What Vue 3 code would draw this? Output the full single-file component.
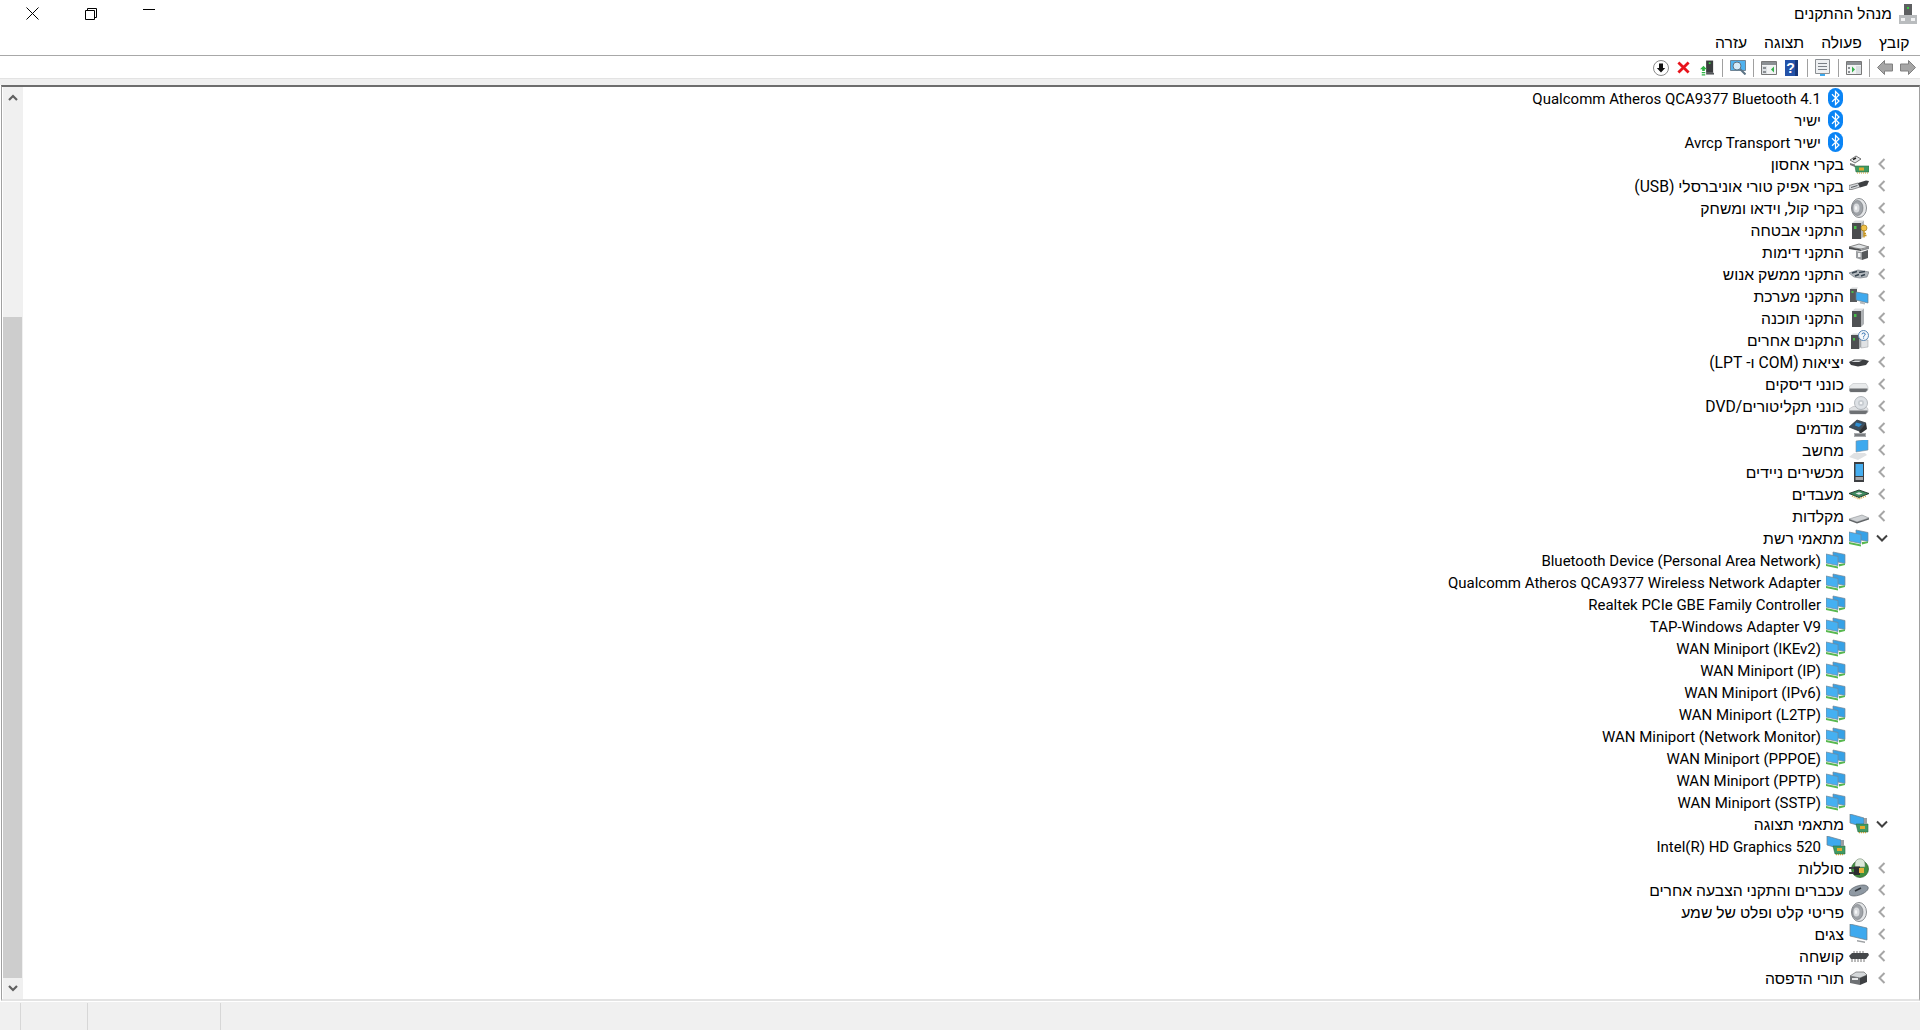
<template>
  <div class="window" dir="rtl">
    <svg class="defs" aria-hidden="true">
      <symbol id="bt" viewBox="0 0 15 20">
        <rect x="0" y="0" width="15" height="20" rx="7.5" fill="#0a84f5" />
        <path d="M4 6.200 11 13 7.500 16.500V3.500L11 7 4 13.800" fill="none" stroke="#fff" stroke-width="1.200" />
      </symbol>
      <symbol id="storage" viewBox="0 0 20 20">
        <path d="M1 6 7 2l5 3-6 4z" fill="#e2e4e6" stroke="#555" stroke-width=".8" />
        <path d="M4 5.500 7 4" stroke="#222" stroke-width="1.400" />
        <path d="M1 9l5 1.500V13L1 11z" fill="#77797b" />
        <path d="M6 12h14v6H7z" fill="#3f9a62" stroke="#2b6b45" stroke-width=".6" />
        <path d="M10 13.500h5v3h-5z" fill="#e0a92e" />
        <path d="M8 19h11" stroke="#c8a030" stroke-width="1.200" stroke-dasharray="1 1" />
      </symbol>
      <symbol id="usb" viewBox="0 0 20 20">
        <path d="M0 9.500 9 7l2 4-8 2.500H0z" fill="#d5d8db" stroke="#666" stroke-width=".7" />
        <path d="M2 11.500 8.500 9.500" stroke="#55585b" />
        <path d="M9 7l8-2.500 3 .5-2 4.500-7 2z" fill="#3d3f42" />
      </symbol>
      <symbol id="speaker" viewBox="0 0 20 20">
        <ellipse cx="10" cy="10" rx="7.500" ry="9.500" fill="#e4e6e8" stroke="#8c8f93" />
        <ellipse cx="8.500" cy="10" rx="5.500" ry="7.500" fill="#9fa3a8" stroke="#6d7075" stroke-width=".6" />
        <ellipse cx="7.500" cy="10" rx="3" ry="4.500" fill="#d9dbde" />
        <ellipse cx="7" cy="10" rx="1.200" ry="2" fill="#f6f7f8" />
      </symbol>
      <symbol id="security" viewBox="0 0 20 20">
        <path d="M3 3h9v16H3z" fill="#4a4c4e" />
        <path d="M3 3l3-2.500h9L12 3z" fill="#dcdee0" />
        <path d="M12 3l3-2.500V16l-3 3z" fill="#b3b6b9" />
        <path d="M5 6h2.500v3H5z" fill="#48c04c" />
        <circle cx="15" cy="8" r="3" fill="#f0c24a" stroke="#a57d1a" stroke-width=".7" />
        <path d="M15 10.500v7M15 15.500h2.500M15 13.500h2" stroke="#c7951f" stroke-width="1.400" />
      </symbol>
      <symbol id="imaging" viewBox="0 0 20 20">
        <path d="M0 5 10 2l10 3-8 2z" fill="#dfe2e4" stroke="#555" stroke-width=".7" />
        <path d="M0 5l12 2.500V9L0 7z" fill="#47494b" />
        <path d="M12 7.500 20 5v2l-8 2z" fill="#8a8d90" />
        <path d="M7 9l6 1v8l-6-2z" fill="#9b9ea1" />
        <path d="M13 10l6-2v8l-6 2z" fill="#55585b" />
        <path d="M9 11h2.500v4H9z" fill="#f1f2f3" />
      </symbol>
      <symbol id="hid" viewBox="0 0 20 20">
        <path d="M0 9 9 6l11 2-2 5-7 1-6-1z" fill="#b3b9be" stroke="#6b7278" stroke-width=".6" />
        <path d="M3 9l5-1.500M10 8.500l6-1M6 12l4-1.500M12 12l4-1.500" stroke="#35424d" stroke-width="1.500" />
      </symbol>
      <symbol id="system" viewBox="0 0 20 20">
        <path d="M1 3h7v13H1z" fill="#57595b" />
        <path d="M1 3l2-1.500h6L8 3z" fill="#d4d6d8" />
        <path d="M2.500 5h2v2h-2z" fill="#47bd4b" />
        <path d="M7 6l12 2v9L7 14z" fill="#3ea9ee" stroke="#6c7c88" stroke-width=".7" />
        <path d="M11 15.500l5 1v2l-5-1z" fill="#b6babd" />
      </symbol>
      <symbol id="tower" viewBox="0 0 20 20">
        <path d="M3 3h9v16H3z" fill="#4f5153" />
        <path d="M3 3l3-2.500h9L12 3z" fill="#dcdee0" />
        <path d="M12 3l3-2.500V16l-3 3z" fill="#aeb1b4" />
        <path d="M5 6h2.500v3H5z" fill="#47bd4b" />
      </symbol>
      <symbol id="other" viewBox="0 0 20 20">
        <path d="M2 5h8v14H2z" fill="#4f5153" />
        <path d="M2 5l2-1.500h8L10 5z" fill="#d9dbdd" />
        <path d="M10 5l2-1.500V17l-2 2z" fill="#a6a9ac" />
        <path d="M4 8h2v2.500H4z" fill="#47bd4b" />
        <path d="M12 10h7v7l-7 1z" fill="#e0e2e4" stroke="#9a9da0" stroke-width=".5" />
        <circle cx="14.500" cy="5.500" r="5" fill="#f5f8fb" stroke="#5b88b5" />
        <path d="M13 4.300c0-1.800 3.200-1.800 3.200 0 0 1.200-1.600 1.100-1.600 2.500M14.600 7.600v1" fill="none" stroke="#2a6cb0" stroke-width="1" />
      </symbol>
      <symbol id="port" viewBox="0 0 20 20">
        <path d="M0 10 5 7.500h10L20 9l-3 4-8 1.500-7-1.500z" fill="#3c3e41" />
        <path d="M2 10l4-1.500h7l-3 1.500z" fill="#d8dbdd" />
      </symbol>
      <symbol id="disk" viewBox="0 0 20 20">
        <path d="M0 13 4 9.500h13l2 3.500v3l-2 2H1l-1-2z" fill="#e8eaeb" stroke="#b5b8ba" stroke-width=".5" />
        <path d="M.5 14.500h18V16l-2 2h-15l-1-1.500z" fill="#6a6d70" />
      </symbol>
      <symbol id="dvd" viewBox="0 0 20 20">
        <path d="M0 13 4 10.500h13l2 2.500v3l-2 2H1l-1-2z" fill="#e0e2e4" stroke="#a8abae" stroke-width=".5" />
        <path d="M.5 14.500h18V16l-2 2h-15l-1-1.500z" fill="#6e7174" />
        <circle cx="12" cy="7" r="6.500" fill="#dde1e5" stroke="#9ba1a6" stroke-width=".7" />
        <circle cx="12" cy="7" r="3" fill="#c6cbd0" />
        <circle cx="12" cy="7" r="1.300" fill="#f5f6f7" />
      </symbol>
      <symbol id="modem" viewBox="0 0 20 20">
        <path d="M0 9 8 2l9 3-7 8z" fill="#3c4f5f" stroke="#2c3134" stroke-width=".7" />
        <path d="M7 4.500l6 1.500-3 3-4-1.500z" fill="#2f8fd3" />
        <path d="M10 13l7-8 1 6-7 5z" fill="#2f3234" />
        <path d="M5 15h12v4H5z" fill="#a8abae" />
        <path d="M6 16.500h10v1H6z" fill="#4c4f52" />
      </symbol>
      <symbol id="computer" viewBox="0 0 20 20">
        <path d="M7 1l12-2v11L7 12z" fill="#3ea9ee" stroke="#7f8d98" stroke-width=".6" />
        <path d="M0 17 5 13h11l2 2-9 5z" fill="#dfe1e3" />
      </symbol>
      <symbol id="mobile" viewBox="0 0 20 20">
        <path d="M5 0h10v20H5z" fill="#3d3f42" />
        <path d="M6.500 2H14v12H6.500z" fill="#45aef0" />
        <path d="M6.500 15H14v3H6.500z" fill="#a6a9ac" />
      </symbol>
      <symbol id="cpu" viewBox="0 0 20 20">
        <path d="M0 9.500 10 6l10 3.500-10 4z" fill="#3f8a5f" stroke="#1f3526" stroke-width=".9" />
        <path d="M6.500 9.500l3.500-1.300 3.500 1.300-3.500 1.300z" fill="#e5e7e8" />
        <path d="M3 12l7 3 7-3" fill="none" stroke="#d0a640" stroke-width="1.400" stroke-dasharray="1 1" />
      </symbol>
      <symbol id="keyboard" viewBox="0 0 20 20">
        <path d="M0 13 13 9l7 3-12 4z" fill="#cfd2d5" stroke="#7b7f83" stroke-width=".5" />
        <path d="M0 13l8 3 12-4v1.500L8 17.500 0 14.500z" fill="#606467" />
      </symbol>
      <symbol id="net" viewBox="0 0 20 20">
        <path d="M7 2l12 2.500v9L7 11z" fill="#36a1e6" stroke="#768795" stroke-width=".7" />
        <path d="M0 4l12 2.500v9L0 13z" fill="#45b0f2" stroke="#768795" stroke-width=".7" />
        <path d="M0 14l12 2.500v2L0 16z" fill="#58b84f" />
        <path d="M13 14l6-.5V15l-6 1.500z" fill="#58b84f" />
      </symbol>
      <symbol id="display" viewBox="0 0 20 20">
        <path d="M1 0l14 4v9L1 9z" fill="#3ea9ee" stroke="#6c7c88" stroke-width=".7" />
        <path d="M7 10h12v8H9z" fill="#3f9a62" stroke="#2b6b45" stroke-width=".6" />
        <path d="M11 12h5v3h-5z" fill="#e0a92e" />
        <path d="M15 4h3v6h-3z" fill="#9b9ea1" />
        <path d="M10 18.700h8" stroke="#c8a030" stroke-width="1.200" stroke-dasharray="1 1" />
      </symbol>
      <symbol id="battery" viewBox="0 0 20 20">
        <ellipse cx="11" cy="11" rx="8.500" ry="8.500" fill="#3f8f3d" stroke="#2b5f2b" stroke-width=".7" />
        <path d="M6 6c0-7 10-7 10 0v3H6z" fill="#dce9da" stroke="#7a8b78" stroke-width=".6" />
        <path d="M0 10h7M0 15h7" stroke="#3a3c3e" stroke-width="1.800" />
        <path d="M5 8.500h6v8.500H5z" fill="#2c2e30" />
        <path d="M10 10h5v5h-5z" fill="#e4b23a" />
      </symbol>
      <symbol id="mouse" viewBox="0 0 20 20">
        <path d="M0 13c0-4 8-8 14-8 4 0 6 2 5 4-1 3-8 7-14 7-3 0-5-1-5-3z" fill="#8f99a3" stroke="#555c63" stroke-width=".7" />
        <path d="M6 11l6-3" stroke="#2f353a" stroke-width="1.800" />
      </symbol>
      <symbol id="monitor" viewBox="0 0 20 20">
        <path d="M1 0l17 4v12L1 12z" fill="#3ea9ee" stroke="#6c7c88" stroke-width=".7" />
        <path d="M8 16l8 1.500V19l-8-1.500z" fill="#9ea1a4" />
      </symbol>
      <symbol id="chip" viewBox="0 0 20 20">
        <path d="M0 10 3 7h16l1 2-3 4H2z" fill="#44474a" />
        <path d="M3 13v3M6 13v3M9 13v3M12 13v3M15 13v3M5 7V5M8 7V5M11 7V5M14 7V5" stroke="#777" stroke-width="1" />
      </symbol>
      <symbol id="print" viewBox="0 0 20 20">
        <path d="M1 8l6-4h8l3 3-7 3z" fill="#d5d8da" stroke="#555" stroke-width=".6" />
        <path d="M1 8l10 2v7L1 15z" fill="#6e7174" />
        <path d="M11 10l7-3v7l-7 3z" fill="#3e4043" />
        <path d="M3 10h6v2H3z" fill="#e7e8e9" />
      </symbol>
      <symbol id="title-icon" viewBox="0 0 20 20">
        <path d="M6 0h8v11H6z" fill="#5d5f61" />
        <path d="M9 3h2v2H9z" fill="#38d040" />
        <path d="M1 11h18v9H1z" fill="#b9bcbe" />
        <path d="M3 14h4v3H3zM13 14h4v3h-4z" fill="#f1f2f3" />
      </symbol>
    </svg>

    <header class="titlebar">
      <svg class="title-icon"><use href="#title-icon" /></svg>
      <span class="title">מנהל ההתקנים</span>
      <div class="win-buttons">
        <span class="win-btn">
          <svg width="12" height="12" viewBox="0 0 12 12"><path d="M0 1.500h12" stroke="#000" /></svg>
        </span>
        <span class="win-btn">
          <svg width="12" height="12" viewBox="0 0 12 12" fill="none" stroke="#000">
            <path d="M2.500 2.500V.5h9v9h-2" />
            <path d="M.5 2.500h9v9h-9z" />
          </svg>
        </span>
        <span class="win-btn">
          <svg width="13" height="13" viewBox="0 0 13 13"><path d="M.5.500l12 12M12.500.500l-12 12" stroke="#000" /></svg>
        </span>
      </div>
    </header>

    <nav class="menubar">
      <span v-for="m in menus" :key="m" class="menu-item">{{ m }}</span>
    </nav>

    <div class="toolbar">
      <button class="tool">
        <svg width="16" height="15" viewBox="0 0 16 15"><path d="M15.500 7.500 8.500.5V4H.5v7h8v3.500z" fill="#a6a6a6" stroke="#808080" /></svg>
      </button>
      <button class="tool">
        <svg width="16" height="15" viewBox="0 0 16 15"><path d="M.5 7.500l7-7V4h8v7h-8v3.500z" fill="#a6a6a6" stroke="#808080" /></svg>
      </button>
      <i class="sep"></i>
      <button class="tool">
        <svg width="16" height="14" viewBox="0 0 16 14">
          <path d="M.5.500h15v13H.5z" fill="#f2f3f4" stroke="#777" />
          <path d="M1 1h14v3H1z" fill="#8b8f93" />
          <path d="M10 5h5v8h-5z" fill="#dce0e3" />
          <path d="M6 5.500l3 3-3 3z" fill="#35b04a" />
          <path d="M2 6h2v2H2zM2 10h2v2H2z" fill="#8b8f93" />
        </svg>
      </button>
      <i class="sep"></i>
      <button class="tool">
        <svg width="15" height="17" viewBox="0 0 15 17">
          <path d="M.5.5h14v14H.5z" fill="#eef0f2" stroke="#8b8f93" />
          <path d="M3 4h9v1H3zM3 7h9v1H3zM3 10h9v1H3z" fill="#7a8087" />
          <path d="M5 15h5v2H5z" fill="#3ea9ee" />
        </svg>
      </button>
      <i class="sep"></i>
      <button class="tool">
        <svg width="13" height="16" viewBox="0 0 13 16">
          <path d="M0 0h13v16H0z" fill="#2352a8" />
          <path d="M10 0h3v16h-3z" fill="#16367a" />
          <text x="5.500" y="13" class="help-mark">?</text>
        </svg>
      </button>
      <button class="tool">
        <svg width="16" height="14" viewBox="0 0 16 14">
          <path d="M.5.500h15v13H.5z" fill="#f2f3f4" stroke="#777" />
          <path d="M1 1h14v3H1z" fill="#8b8f93" />
          <path d="M1 5h5v8H1z" fill="#dce0e3" />
          <path d="M13 5.500l-3 3 3 3z" fill="#35b04a" />
          <path d="M2 6h3v2H2zM2 10h3v2H2z" fill="#8b8f93" />
        </svg>
      </button>
      <i class="sep"></i>
      <button class="tool">
        <svg width="16" height="15" viewBox="0 0 16 15">
          <path d="M.5.500h15v10H.5z" fill="#4fb2ef" stroke="#6f8596" />
          <circle cx="7" cy="6" r="4" fill="#d6ebf8" stroke="#5c7385" />
          <path d="M10 9l5.500 5.500" stroke="#5c7385" stroke-width="2" />
        </svg>
      </button>
      <i class="sep"></i>
      <button class="tool">
        <svg width="14" height="16" viewBox="0 0 16 17">
          <path d="M7 0h8v14H7z" fill="#3a3c3e" />
          <path d="M10 2h2v2h-2z" fill="#38d040" />
          <path d="M4 6 0 10h2.500v2h3v-2H8z" fill="#2fb344" />
          <path d="M2 13h4v1.500H2zM2 15.500h4V17H2z" fill="#2fb344" />
          <path d="M7 14h9v2H7z" fill="#55585b" />
        </svg>
      </button>
      <button class="tool">
        <svg width="13" height="13" viewBox="0 0 14 14"><path d="M1.500 1.500l11 11M12.500 1.500l-11 11" stroke="#e8141c" stroke-width="3" /></svg>
      </button>
      <button class="tool">
        <svg width="16" height="16" viewBox="0 0 16 16">
          <circle cx="8" cy="8" r="7.500" fill="#fff" stroke="#8a8a8a" />
          <path d="M8 12.500 3.800 8H6V3.500h4V8h2.200z" fill="#111" />
        </svg>
      </button>
    </div>

    <div class="toolbar-gap"></div>

    <main class="tree">
      <ul class="rows">
        <li v-for="item in rows" :key="item.name" class="row" :class="{ child: item.child }">
          <span v-if="!item.child" class="chev">
            <svg v-if="item.open" width="12" height="8" viewBox="0 0 12 8"><path d="M1 1.500l5 5 5-5" fill="none" stroke="#404040" stroke-width="2" /></svg>
            <svg v-else width="8" height="12" viewBox="0 0 8 12"><path d="M6.500 1 1.500 6l5 5" fill="none" stroke="#a6a6a6" stroke-width="2" /></svg>
          </span>
          <svg class="icon" :class="{ bt: item.icon === 'bt' }"><use :href="'#' + item.icon" /></svg>
          <span class="label" dir="auto">{{ item.name }}</span>
        </li>
      </ul>
      <div class="scrollbar">
        <span class="sb-btn">
          <svg width="10" height="7" viewBox="0 0 10 7"><path d="M1 6l4-4 4 4" fill="none" stroke="#606060" stroke-width="2.200" /></svg>
        </span>
        <div class="sb-track"><div class="sb-thumb"></div></div>
        <span class="sb-btn">
          <svg width="10" height="7" viewBox="0 0 10 7"><path d="M1 1l4 4 4-4" fill="none" stroke="#606060" stroke-width="2.200" /></svg>
        </span>
      </div>
    </main>

    <footer class="statusbar">
      <span class="pane wide"></span>
      <span class="pane small"></span>
      <span class="pane tiny"></span>
      <span class="pane rest"></span>
    </footer>
  </div>
</template>

<script setup>
const menus = ['קובץ', 'פעולה', 'תצוגה', 'עזרה']

const rows = [
  { name: 'Qualcomm Atheros QCA9377 Bluetooth 4.1', icon: 'bt', child: true },
  { name: 'ישיר', icon: 'bt', child: true },
  { name: 'ישיר Avrcp Transport', icon: 'bt', child: true },
  { name: 'בקרי אחסון', icon: 'storage' },
  { name: 'בקרי אפיק טורי אוניברסלי (USB)', icon: 'usb' },
  { name: 'בקרי קול, וידאו ומשחק', icon: 'speaker' },
  { name: 'התקני אבטחה', icon: 'security' },
  { name: 'התקני דימות', icon: 'imaging' },
  { name: 'התקני ממשק אנוש', icon: 'hid' },
  { name: 'התקני מערכת', icon: 'system' },
  { name: 'התקני תוכנה', icon: 'tower' },
  { name: 'התקנים אחרים', icon: 'other' },
  { name: 'יציאות (COM ו- LPT)', icon: 'port' },
  { name: 'כונני דיסקים', icon: 'disk' },
  { name: 'כונני תקליטורים/DVD', icon: 'dvd' },
  { name: 'מודמים', icon: 'modem' },
  { name: 'מחשב', icon: 'computer' },
  { name: 'מכשירים ניידים', icon: 'mobile' },
  { name: 'מעבדים', icon: 'cpu' },
  { name: 'מקלדות', icon: 'keyboard' },
  { name: 'מתאמי רשת', icon: 'net', open: true },
  { name: 'Bluetooth Device (Personal Area Network)', icon: 'net', child: true },
  { name: 'Qualcomm Atheros QCA9377 Wireless Network Adapter', icon: 'net', child: true },
  { name: 'Realtek PCIe GBE Family Controller', icon: 'net', child: true },
  { name: 'TAP-Windows Adapter V9', icon: 'net', child: true },
  { name: 'WAN Miniport (IKEv2)', icon: 'net', child: true },
  { name: 'WAN Miniport (IP)', icon: 'net', child: true },
  { name: 'WAN Miniport (IPv6)', icon: 'net', child: true },
  { name: 'WAN Miniport (L2TP)', icon: 'net', child: true },
  { name: 'WAN Miniport (Network Monitor)', icon: 'net', child: true },
  { name: 'WAN Miniport (PPPOE)', icon: 'net', child: true },
  { name: 'WAN Miniport (PPTP)', icon: 'net', child: true },
  { name: 'WAN Miniport (SSTP)', icon: 'net', child: true },
  { name: 'מתאמי תצוגה', icon: 'display', open: true },
  { name: 'Intel(R) HD Graphics 520', icon: 'display', child: true },
  { name: 'סוללות', icon: 'battery' },
  { name: 'עכברים והתקני הצבעה אחרים', icon: 'mouse' },
  { name: 'פריטי קלט ופלט של שמע', icon: 'speaker' },
  { name: 'צגים', icon: 'monitor' },
  { name: 'קושחה', icon: 'chip' },
  { name: 'תורי הדפסה', icon: 'print' }
]
</script>

<style>
html,
body {
  margin: 0;
  background: #fff;
}
</style>

<style scoped>
.window {
  width: 1920px;
  height: 1030px;
  display: flex;
  flex-direction: column;
  overflow: hidden;
  background: #fff;
  color: #000;
  font-family: Roboto, "Liberation Sans", sans-serif;
  font-size: 15px;
}

.defs {
  display: block;
  width: 0;
  height: 0;
}

.titlebar {
  height: 32px;
  flex-shrink: 0;
  display: flex;
  align-items: flex-start;
  padding-right: 2px;
}

.title-icon {
  width: 20px;
  height: 20px;
  margin-top: 4px;
}

.title {
  margin-right: 6px;
  font-size: 15.500px;
  line-height: 29px;
}

.win-buttons {
  margin-right: auto;
  margin-left: 3px;
  display: flex;
}

.win-btn {
  width: 58.500px;
  height: 27px;
  display: flex;
  align-items: center;
  justify-content: center;
}

.menubar {
  height: 23px;
  flex-shrink: 0;
  display: flex;
  padding-right: 2px;
  border-bottom: 1px solid #a8a8a8;
}

.menu-item {
  padding: 0 8.500px;
  font-size: 15.700px;
  line-height: 22px;
}

.toolbar {
  height: 22px;
  box-sizing: border-box;
  padding-top: 1px;
  flex-shrink: 0;
  display: flex;
  align-items: center;
  padding-right: 1px;
}

.tool {
  width: 23px;
  height: 21px;
  padding: 0;
  border: 0;
  background: none;
  display: flex;
  align-items: center;
  justify-content: center;
}

.help-mark {
  direction: ltr;
  text-anchor: middle;
  font-family: "Liberation Sans", sans-serif;
  font-size: 14px;
  font-weight: 700;
  fill: #fff;
}

.sep {
  width: 8px;
  display: flex;
  justify-content: center;
}

.sep::before {
  content: "";
  width: 1px;
  height: 18px;
  background: #a0a0a0;
}

.toolbar-gap {
  height: 7px;
  flex-shrink: 0;
  background: #f0f0f0;
  border-top: 1px solid #e3e3e3;
  box-sizing: border-box;
}

.tree {
  flex: 1;
  min-height: 0;
  display: flex;
  margin-left: 1px;
  border-top: 2px solid #6d6d6d;
  border-left: 1px solid #a0a0a0;
  border-right: 1px solid #a0a0a0;
  border-bottom: 2px solid #e3e3e3;
}

.rows {
  flex: 1;
  min-width: 0;
  list-style: none;
  margin: 0;
  padding: 0;
  overflow: hidden;
}

.row {
  height: 22px;
  display: flex;
  align-items: center;
  padding-right: 26px;
  white-space: nowrap;
}

.row.child {
  padding-right: 73px;
}

.chev {
  width: 22px;
  margin-left: 2px;
  display: flex;
  align-items: center;
  justify-content: center;
}

.icon {
  width: 20px;
  height: 20px;
  flex-shrink: 0;
}

.icon.bt {
  width: 15px;
  margin: 0 3px 0 2px;
}

.label {
  margin-right: 5px;
  padding-top: 2px;
}

.row:not(.child) .label {
  padding-top: 0;
  font-size: 15.700px;
}

.scrollbar {
  width: 20px;
  margin-left: 1px;
  flex-shrink: 0;
  display: flex;
  flex-direction: column;
  background: #f0f0f0;
}

.sb-btn {
  height: 21px;
  flex-shrink: 0;
  display: flex;
  align-items: center;
  justify-content: center;
}

.sb-track {
  flex: 1;
  display: flex;
  flex-direction: column;
  justify-content: flex-end;
}

.sb-thumb {
  height: 661px;
  margin-right: 1px;
  background: #cdcdcd;
}

.statusbar {
  height: 27px;
  flex-shrink: 0;
  margin-top: 1px;
  display: flex;
  background: #f0f0f0;
  padding-top: 1px;
}

.pane {
  border-left: 1px solid #d7d7d7;
}

.pane.wide {
  flex: 1;
}

.pane.small {
  width: 132px;
}

.pane.tiny {
  width: 66px;
}

.pane.rest {
  width: 20px;
  border-left: 0;
}
</style>
